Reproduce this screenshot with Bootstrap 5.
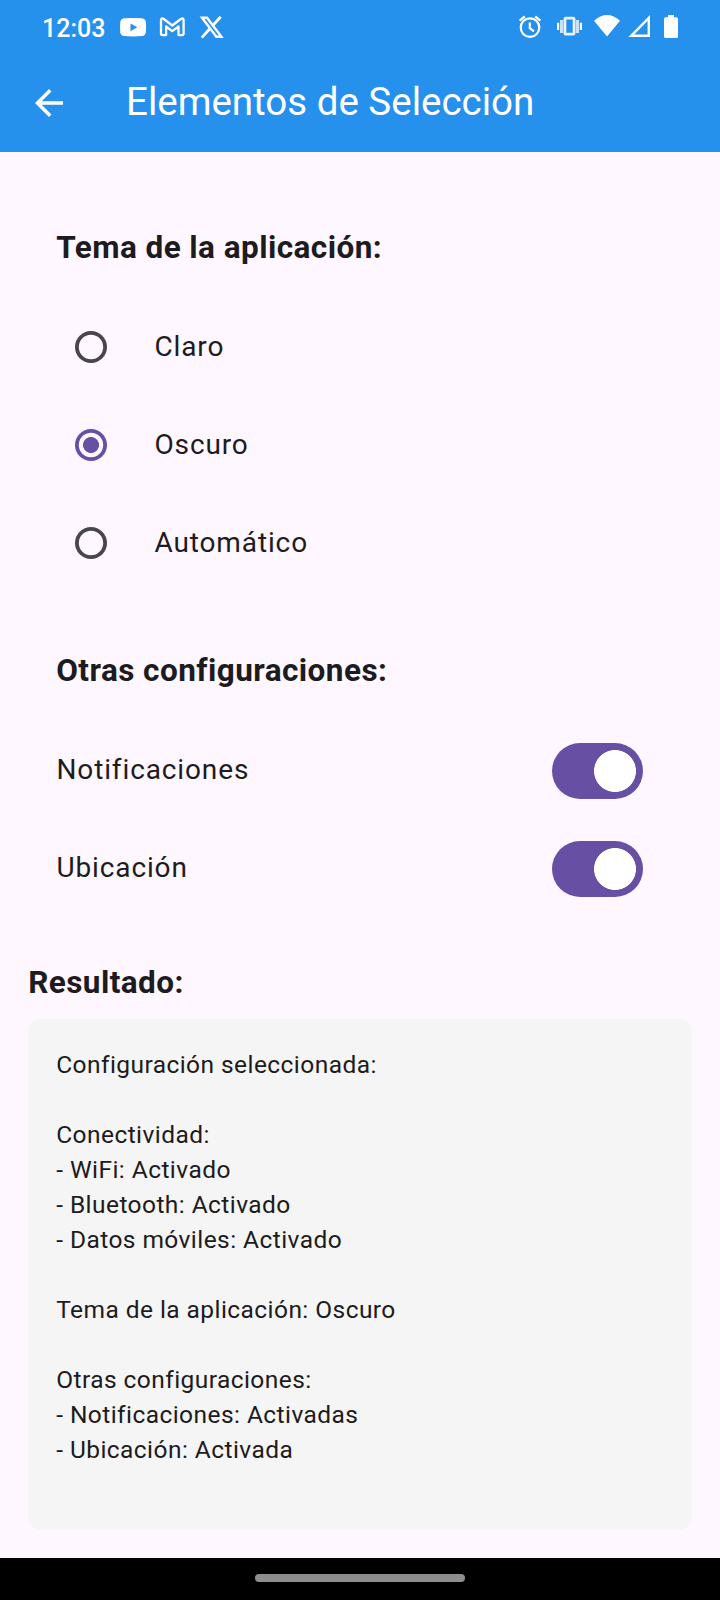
<!DOCTYPE html>
<html lang="es">
<head>
<meta charset="utf-8">
<meta name="viewport" content="width=device-width, initial-scale=1">
<title>Elementos de Selección</title>
<link href="https://cdn.jsdelivr.net/npm/bootstrap@5.3.0/dist/css/bootstrap.min.css" rel="stylesheet">
<style>
  body { font-family: Roboto, "Noto Sans", sans-serif; color: #1d1b20; background: #fef7ff; height: 1600px; overflow: hidden; }
  .app-header { background: #2690ed; height: 152px; }
  .status-bar { height: 54px; padding: 0 40px 0 42px; }
  .clock { font-size: 25px; font-weight: 500; line-height: 54px; width: 77px; padding-top: 3px; }
  .toolbar { height: 98px; padding-left: 28px; }
  .toolbar h1 { font-size: 38.5px; font-weight: 400; line-height: 49px; margin: 0 0 3px 56px; }
  .section-title { font-size: 31.5px; font-weight: 700; line-height: 42px; letter-spacing: .4375px; margin: 0; text-indent: .2px; }
  .settings { padding: 75px 28px 0; }
  .settings-group { padding-left: 28px; }
  .options { padding-top: 29px; }
  .option-row { height: 98px; font-size: 28px; letter-spacing: .875px; line-height: 42px; }
  .option-row span { padding-left: .45px; }
  .form-check-input.pick { width: 32px; height: 32px; margin: 0 47px 0 19px; border: 0; background: transparent; box-shadow: inset 0 0 0 3.8px #49454f; }
  .form-check-input.pick:checked { box-shadow: inset 0 0 0 3.8px #6750a4; background: radial-gradient(circle, #6750a4 7.6px, transparent 8.3px); }
  .form-check-input.toggle { width: 91px; height: 56px; margin: 1px 49px 0 0; border: 0; border-radius: 28px; box-shadow: none; }
  .form-check-input.toggle:checked { background: #6750a4 radial-gradient(circle at 63px 28px, #fff 20.6px, transparent 21.3px); }
  .others-title { margin-top: 58px; }
  .result-title { margin-top: 45px; }
  .result-box { height: 511px; margin-top: 15px; background: #f5f5f5; border-radius: 14px; padding: 28px 28px 28px 28.2px; font-size: 24.5px; line-height: 35px; letter-spacing: .4375px; white-space: pre-line; }
  .gesture-bar { height: 42px; background: #000; }
  .gesture-pill { width: 210px; height: 8px; border-radius: 4px; background: #8d8d8d; margin-top: -2px; }
</style>
</head>
<body class="d-flex flex-column">
<header class="app-header text-white flex-shrink-0">
  <div class="status-bar d-flex align-items-center">
    <span class="clock flex-shrink-0">12:03</span>
    <svg class="flex-shrink-0" width="121" height="54" viewBox="119 0 121 54" fill="none" stroke="#fff">
      <path fill="#fff" stroke="none" d="M124 18.300Q133 17.500 142 18.300Q145.400 18.700 145.800 22Q146.400 27 145.800 32.200Q145.400 35.600 142 36Q133 36.800 124 36Q120.700 35.600 120.300 32.200Q119.700 27 120.300 22Q120.700 18.700 124 18.300Z"/><path fill="#2690ed" stroke="none" d="M130.500 23.500V31.200L137.300 27.300Z"/>
      <path d="M161 20.200Q161 17.500 163.800 19L172.300 25.500L180.800 19Q183.600 17.500 183.600 20.200V33.500Q183.600 35.100 182 35.100H178.500V26.500L172.300 31.200L166.100 26.500V35.100H162.600Q161 35.100 161 33.500Z" stroke-width="2.300" stroke-linejoin="round"/>
      <path d="M202 17.800H207L221.400 36.800H216.400Z" stroke-width="2.400"/><path d="M220.700 16.800L213 25.300M209.800 28.800L201.800 37.600" stroke-width="2.800"/>
    </svg>
    <svg class="ms-auto flex-shrink-0" width="162" height="54" viewBox="518 0 162 54" fill="none" stroke="#fff">
      <circle cx="530" cy="27.600" r="9.300" stroke-width="2.200"/><path d="M529.800 22.500V28.200L534 31.300" stroke-width="2.200"/><path d="M519.600 20.600L524.800 16.500M535.200 16.500L540.400 20.600" stroke-width="2.400"/>
      <rect x="564.900" y="18.200" width="9.200" height="16" rx="1" stroke-width="2.800" stroke-opacity=".9"/><path d="M561.500 20V33M577.500 20V33" stroke-width="3" stroke-opacity=".75"/><path d="M558.100 22.700V30M580.900 22.700V30" stroke-width="2.200"/>
      <path d="M607 36.500L594 20.800Q607 9.400 620 20.800Z" fill="#fff" stroke="none"/>
      <path d="M631.200 35.800H648.800V17.900Z" stroke-width="2.400"/>
      <path d="M668 15H674V17.300H676.500Q678 17.300 678 18.800V36.500Q678 38 676.500 38H665.500Q664 38 664 36.500V18.800Q664 17.300 665.500 17.300H668Z" fill="#fff" stroke="none"/>
    </svg>
  </div>
  <div class="toolbar d-flex align-items-center">
    <svg width="42" height="42" viewBox="0 0 24 24" fill="#fff" aria-label="Volver"><path d="M20 11H7.830l5.590-5.590L12 4l-8 8 8 8 1.410-1.410L7.830 13H20z"/></svg>
    <h1>Elementos de Selección</h1>
  </div>
</header>
<main class="flex-grow-1">
  <section class="settings">
    <div class="settings-group">
      <h2 class="section-title">Tema de la aplicación:</h2>
      <div class="options">
        <label class="option-row d-flex align-items-center"><input class="form-check-input pick" type="radio" name="tema"><span>Claro</span></label>
        <label class="option-row d-flex align-items-center"><input class="form-check-input pick" type="radio" name="tema" checked><span>Oscuro</span></label>
        <label class="option-row d-flex align-items-center"><input class="form-check-input pick" type="radio" name="tema"><span>Automático</span></label>
      </div>
      <h2 class="section-title others-title">Otras configuraciones:</h2>
      <div class="options">
        <label class="option-row d-flex align-items-center justify-content-between"><span>Notificaciones</span><input class="form-check-input toggle" type="checkbox" role="switch" checked></label>
        <label class="option-row d-flex align-items-center justify-content-between"><span>Ubicación</span><input class="form-check-input toggle" type="checkbox" role="switch" checked></label>
      </div>
    </div>
    <h2 class="section-title result-title">Resultado:</h2>
    <div class="result-box">Configuración seleccionada:

Conectividad:
- WiFi: Activado
- Bluetooth: Activado
- Datos móviles: Activado

Tema de la aplicación: Oscuro

Otras configuraciones:
- Notificaciones: Activadas
- Ubicación: Activada</div>
  </section>
</main>
<footer class="gesture-bar d-flex justify-content-center align-items-center flex-shrink-0"><div class="gesture-pill"></div></footer>
<script src="https://cdn.jsdelivr.net/npm/bootstrap@5.3.0/dist/js/bootstrap.bundle.min.js"></script>
</body>
</html>
